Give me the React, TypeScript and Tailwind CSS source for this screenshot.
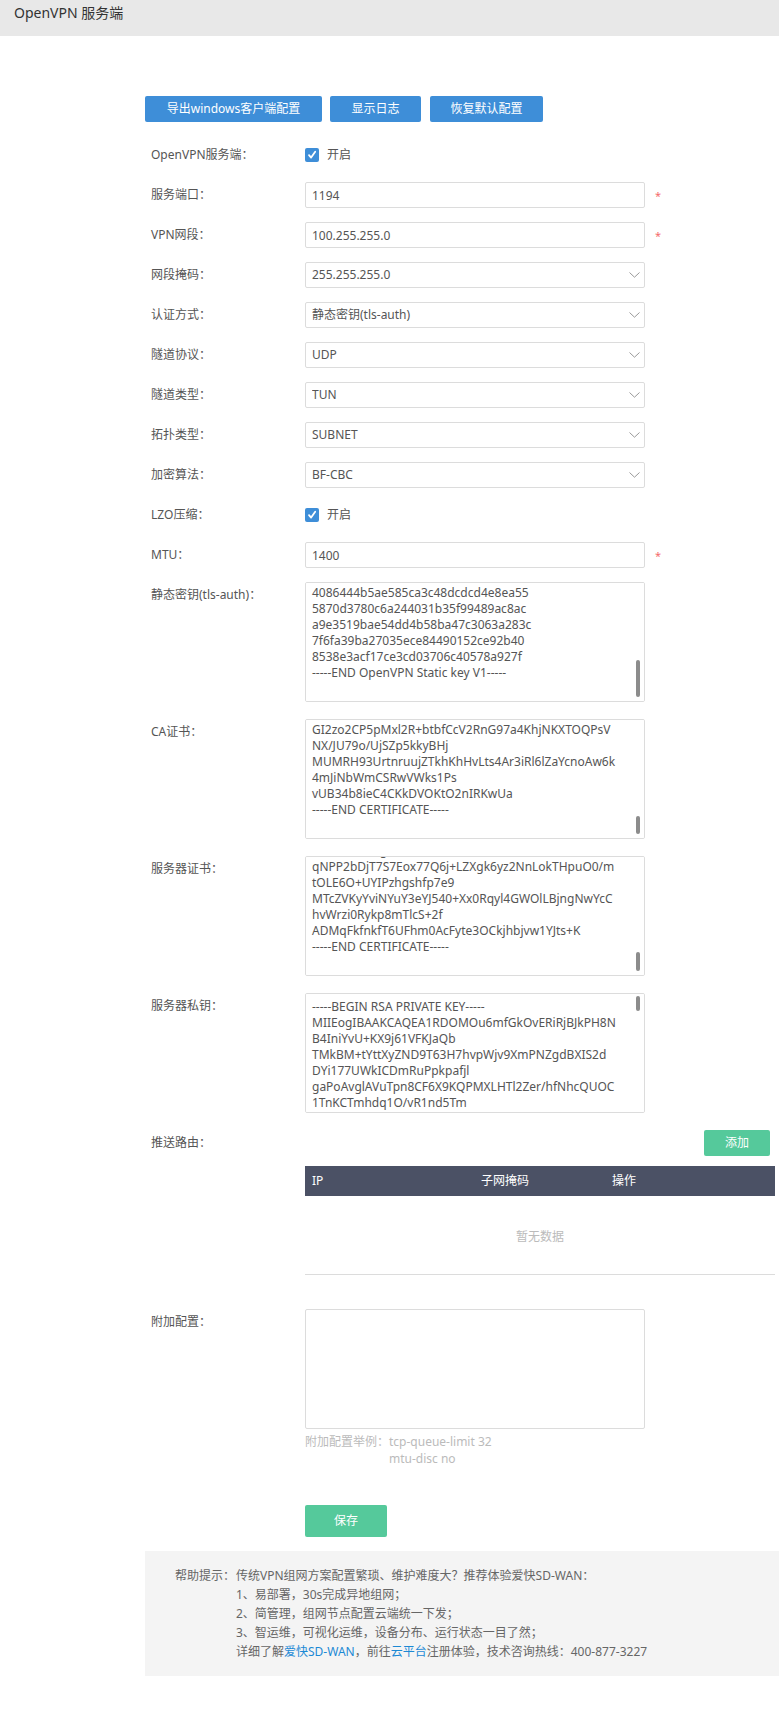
import { useLayoutEffect, useRef, useState, type ReactNode } from "react";

const B64 = "ABCDEFGHIJKLMNOPQRSTUVWXYZabcdefghijklmnopqrstuvwxyz0123456789+/";
const HEX = "0123456789abcdef";

// 简单的伪随机串，只用来撑出文本框的滚动高度
function fake(seed: number, len: number, chars: string) {
  let s = seed;
  let out = "";
  for (let i = 0; i < len; i++) {
    s = (s * 16807) % 2147483647;
    out += chars[s % chars.length];
  }
  return out;
}

function b64Lines(seed: number, count: number) {
  const lines: string[] = [];
  for (let i = 0; i < count; i++) {
    const l = fake(seed + i * 131, 64, B64);
    lines.push(l.slice(0, 43), l.slice(43));
  }
  return lines;
}

const staticKey = [
  "#",
  "# 2048 bit OpenVPN static key",
  "#",
  "-----BEGIN OpenVPN Static key V1-----",
  ...Array.from({ length: 11 }, (_, i) => fake(977 + i * 53, 32, HEX)),
  "4086444b5ae585ca3c48dcdcd4e8ea55",
  "5870d3780c6a244031b35f99489ac8ac",
  "a9e3519bae54dd4b58ba47c3063a283c",
  "7f6fa39ba27035ece84490152ce92b40",
  "8538e3acf17ce3cd03706c40578a927f",
  "-----END OpenVPN Static key V1-----",
  "",
].join("\n");

const caCert = [
  "-----BEGIN CERTIFICATE-----",
  ...b64Lines(71, 19),
  "GI2zo2CP5pMxl2R+btbfCcV2RnG97a4KhjNKXTOQPsV",
  "NX/JU79o/UjSZp5kkyBHj",
  "MUMRH93UrtnruujZTkhKhHvLts4Ar3iRl6lZaYcnoAw6k",
  "4mJiNbWmCSRwVWks1Ps",
  "vUB34b8ieC4CKkDVOKtO2nIRKwUa",
  "-----END CERTIFICATE-----",
  "",
].join("\n");

const serverCert = [
  "-----BEGIN CERTIFICATE-----",
  ...b64Lines(313, 17),
  "qNPP2bDjT7S7Eox77Q6j+LZXgk6yz2NnLokTHpuO0/m",
  "tOLE6O+UYIPzhgshfp7e9",
  "MTcZVKyYviNYuY3eYJ540+Xx0Rqyl4GWOlLBjngNwYcC",
  "hvWrzi0Rykp8mTlcS+2f",
  "ADMqFkfnkfT6UFhm0AcFyte3OCkjhbjvw1YJts+K",
  "-----END CERTIFICATE-----",
  "",
].join("\n");

const serverKey = [
  "-----BEGIN RSA PRIVATE KEY-----",
  "MIIEogIBAAKCAQEA1RDOMOu6mfGkOvERiRjBJkPH8N",
  "B4IniYvU+KX9j61VFKJaQb",
  "TMkBM+tYttXyZND9T63H7hvpWjv9XmPNZgdBXIS2d",
  "DYi177UWkICDmRuPpkpafjl",
  "gaPoAvglAVuTpn8CF6X9KQPMXLHTl2Zer/hfNhcQUOC",
  "1TnKCTmhdq1O/vR1nd5Tm",
  ...b64Lines(541, 22),
  "Xk2P9qLmZ0aB7cR1tVw3yE==",
  "-----END RSA PRIVATE KEY-----",
].join("\n");

const inputCls =
  "h-[26px] w-full rounded-[2px] border border-[#dcdcdc] bg-white px-[6px] text-[12px] text-[#555] outline-none";

const areaCls =
  "block h-[120px] w-full resize-none overflow-x-hidden overflow-y-auto rounded-[2px] border border-[#dcdcdc] bg-white px-[6px] pt-[5px] pb-[4px] text-[12px] leading-[16px] text-[#555] outline-none [scrollbar-width:none]";

function Row({
  label,
  children,
  required,
  className = "mb-[14px]",
}: {
  label: string;
  children: ReactNode;
  required?: boolean;
  className?: string;
}) {
  return (
    <div className={`flex items-start ${className}`}>
      <div className="w-[160px] shrink-0 pl-[6px] leading-[26px]">{label}</div>
      <div className="w-[340px] shrink-0">{children}</div>
      {required && <span className="ml-[10px] h-[26px] pt-[1px] text-[11px] leading-[26px] text-[#f56c6c]">*</span>}
    </div>
  );
}

function Check() {
  return (
    <div className="flex h-[26px] items-center">
      <span className="flex h-[14px] w-[14px] items-center justify-center rounded-[2px] bg-[#3e8ed8]">
        <svg width="10" height="10" viewBox="0 0 10 10" fill="none">
          <path d="M2 5.2 4.1 7.6 8.2 1.8" stroke="white" strokeWidth="1.8" strokeLinecap="round" strokeLinejoin="round" />
        </svg>
      </span>
      <span className="ml-[8px]">开启</span>
    </div>
  );
}

function Select({ value, options }: { value: string; options: string[] }) {
  return (
    <div className="relative">
      <select defaultValue={value} className={`${inputCls} appearance-none`}>
        {options.map((o) => (
          <option key={o}>{o}</option>
        ))}
      </select>
      <svg className="pointer-events-none absolute right-[5px] top-[10px]" width="11" height="6" viewBox="0 0 11 6" fill="none">
        <path d="M0.5 0.5 5.5 5.2 10.5 0.5" stroke="#999" strokeWidth="1" />
      </svg>
    </div>
  );
}

// 文本框 + 细滚动条
function KeyArea({ value, bottom }: { value: string; bottom?: boolean }) {
  const ref = useRef<HTMLTextAreaElement>(null);
  const [thumb, setThumb] = useState({ top: 3, height: 0 });

  const update = () => {
    const el = ref.current;
    if (!el) return;
    const track = el.offsetHeight - 8;
    const h = Math.max(12, (el.clientHeight / el.scrollHeight) * track);
    const max = el.scrollHeight - el.clientHeight;
    const top = 3 + (max > 0 ? (el.scrollTop / max) * (track - h) : 0);
    setThumb({ top, height: el.scrollHeight > el.clientHeight ? h : 0 });
  };

  useLayoutEffect(() => {
    const el = ref.current;
    if (el && bottom) el.scrollTop = el.scrollHeight;
    update();
  }, []);

  return (
    <div className="relative">
      <textarea ref={ref} className={areaCls} wrap="off" defaultValue={value} onScroll={update} />
      {thumb.height > 0 && (
        <div
          className="pointer-events-none absolute right-[5px] w-[4px] rounded-[2px] bg-[#8c8c8c]"
          style={{ top: thumb.top, height: thumb.height }}
        />
      )}
    </div>
  );
}

export default function App() {
  return (
    <div className="min-h-[1713px] bg-white font-[family-name:'Noto_Sans','Noto_Sans_CJK_SC',sans-serif] text-[12px] text-[#555]">
      <div className="h-[36px] bg-[#e8e8e8] pl-[14px] pt-[3px] text-[14px] leading-[20px] text-[#333]">
        OpenVPN 服务端
      </div>

      <div className="pl-[145px] pt-[60px]">
        {/* 顶部按钮 */}
        <div className="flex h-[26px] gap-[8px] text-white">
          <button className="w-[177px] rounded-[2px] bg-[#3e8ed8]">导出windows客户端配置</button>
          <button className="w-[91px] rounded-[2px] bg-[#3e8ed8]">显示日志</button>
          <button className="ml-px w-[113px] rounded-[2px] bg-[#3e8ed8]">恢复默认配置</button>
        </div>

        <div className="mt-[20px]">
          <Row label="OpenVPN服务端：">
            <Check />
          </Row>
          <Row label="服务端口：" required>
            <input className={inputCls} defaultValue="1194" />
          </Row>
          <Row label="VPN网段：" required>
            <input className={inputCls} defaultValue="100.255.255.0" />
          </Row>
          <Row label="网段掩码：">
            <Select value="255.255.255.0" options={["255.255.255.0", "255.255.0.0", "255.0.0.0"]} />
          </Row>
          <Row label="认证方式：">
            <Select value="静态密钥(tls-auth)" options={["静态密钥(tls-auth)", "证书认证", "用户名密码"]} />
          </Row>
          <Row label="隧道协议：">
            <Select value="UDP" options={["UDP", "TCP"]} />
          </Row>
          <Row label="隧道类型：">
            <Select value="TUN" options={["TUN", "TAP"]} />
          </Row>
          <Row label="拓扑类型：">
            <Select value="SUBNET" options={["SUBNET", "NET30", "P2P"]} />
          </Row>
          <Row label="加密算法：">
            <Select value="BF-CBC" options={["BF-CBC", "AES-128-CBC", "AES-256-CBC"]} />
          </Row>
          <Row label="LZO压缩：">
            <Check />
          </Row>
          <Row label="MTU：" required>
            <input className={inputCls} defaultValue="1400" />
          </Row>
          <Row label="静态密钥(tls-auth)：" className="mb-[17px]">
            <KeyArea value={staticKey} bottom />
          </Row>
          <Row label="CA证书：" className="mb-[17px]">
            <KeyArea value={caCert} bottom />
          </Row>
          <Row label="服务器证书：" className="mb-[17px]">
            <KeyArea value={serverCert} bottom />
          </Row>
          <Row label="服务器私钥：" className="mb-[17px]">
            <KeyArea value={serverKey} />
          </Row>

          {/* 推送路由 */}
          <div className="mb-[34px] flex items-start">
            <div className="w-[160px] shrink-0 pl-[6px] leading-[26px]">推送路由：</div>
            <div className="w-[470px] shrink-0">
              <div className="flex justify-end pr-[5px]">
                <button className="h-[26px] w-[66px] rounded-[2px] bg-[#55c99b] text-white">添加</button>
              </div>
              <div className="mt-[10px] flex h-[30px] items-center bg-[#4b5165] text-white">
                <div className="w-[169px] pl-[7px]">IP</div>
                <div className="w-[131px] pl-[7px]">子网掩码</div>
                <div className="pl-[7px]">操作</div>
              </div>
              <div className="flex h-[79px] items-center justify-center border-b border-[#dcdcdc] pt-[3px] text-[#bbb]">
                暂无数据
              </div>
            </div>
          </div>

          <div className="flex items-start">
            <div className="w-[160px] shrink-0 pl-[6px] leading-[26px]">附加配置：</div>
            <div className="w-[340px] shrink-0">
              <textarea className={areaCls} />
              <div className="mt-[4px] flex leading-[17px] text-[#bbb]">
                <span className="w-[84px] shrink-0">附加配置举例：</span>
                <div>
                  <div>tcp-queue-limit 32</div>
                  <div>mtu-disc no</div>
                </div>
              </div>
            </div>
          </div>

          <div className="mt-[38px] pl-[160px]">
            <button className="h-[32px] w-[82px] rounded-[2px] bg-[#55c99b] text-white">保存</button>
          </div>
        </div>

        {/* 帮助提示 */}
        <div className="mt-[14px] flex bg-[#f4f4f4] py-[15px] pl-[30px] leading-[19px] text-[#666]">
          <span className="w-[61px] shrink-0">帮助提示：</span>
          <div>
            <div>传统VPN组网方案配置繁琐、维护难度大？推荐体验爱快SD-WAN：</div>
            <div>1、易部署，30s完成异地组网；</div>
            <div>2、简管理，组网节点配置云端统一下发；</div>
            <div>3、智运维，可视化运维，设备分布、运行状态一目了然；</div>
            <div>
              详细了解<a className="text-[#1c89d4]">爱快SD-WAN</a>，前往<a className="text-[#1c89d4]">云平台</a>
              注册体验，技术咨询热线：400-877-3227
            </div>
          </div>
        </div>
      </div>
    </div>
  );
}
